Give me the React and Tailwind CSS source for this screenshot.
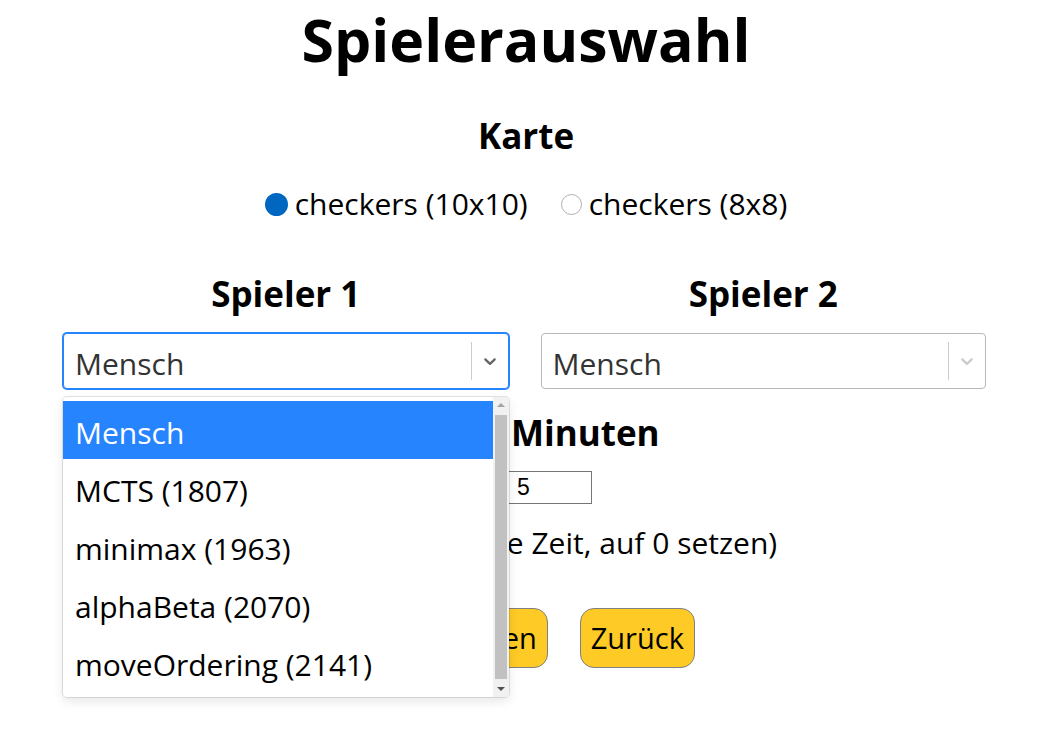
import React from 'react';

const Chevron = ({ className }) => (
    <svg viewBox="0 0 20 20" className={className} fill="currentColor" aria-hidden="true">
        <path d="M4.516 7.548c0.436-0.446 1.043-0.481 1.576 0l3.908 3.747 3.908-3.747c0.533-0.481 1.141-0.446 1.574 0 0.436 0.445 0.408 1.197 0 1.615-0.406 0.418-4.695 4.502-4.695 4.502-0.217 0.223-0.502 0.335-0.787 0.335s-0.57-0.112-0.789-0.335c0 0-4.287-4.084-4.695-4.502s-0.436-1.17 0-1.615z" />
    </svg>
);

const Select = ({ focused }) => (
    <div
        className={
            focused
                ? 'flex h-[56px] items-center rounded-[4px] border border-[#2684ff] bg-white shadow-[0_0_0_1px_#2684ff]'
                : 'flex h-[56px] items-center rounded-[4px] border border-[#b8b8b8] bg-white'
        }
    >
        <div className="flex-1 pl-[11px] pt-[6px] text-[30px] leading-none text-[#333]">Mensch</div>
        <span className="h-[38px] w-px bg-[#cccccc]"></span>
        <div className={focused ? 'p-2 text-[#666]' : 'p-2 text-[#cccccc]'}>
            <Chevron className="h-5 w-5" />
        </div>
    </div>
);

const options = ['Mensch', 'MCTS (1807)', 'minimax (1963)', 'alphaBeta (2070)', 'moveOrdering (2141)'];

const Menu = () => (
    <div className="absolute left-0 right-0 top-[calc(100%+8px)] z-10 flex h-[300px] overflow-hidden rounded-[4px] bg-white shadow-[0_0_0_1px_rgba(0,0,0,0.1),0_4px_11px_rgba(0,0,0,0.1)]">
        <div className="flex-1 py-1">
            {options.map((o, i) => (
                <div
                    key={o}
                    className={
                        i === 0
                            ? 'flex h-[58px] items-center bg-[#2684ff] px-3 pt-[4px] text-[30px] text-white'
                            : 'flex h-[58px] items-center px-3 pt-[4px] text-[30px] text-black'
                    }
                >
                    {o}
                </div>
            ))}
        </div>
        {/* fake scrollbar */}
        <div className="flex w-[16px] flex-col items-center bg-[#f1f1f1]">
            <div className="mt-[6px] h-0 w-0 border-x-[4px] border-b-[4px] border-x-transparent border-b-[#a3a3a3]"></div>
            <div className="mt-[8px] w-[12px] flex-1 bg-[#c1c1c1]"></div>
            <div className="mb-[6px] mt-[8px] h-0 w-0 border-x-[4px] border-t-[4px] border-x-transparent border-t-[#505050]"></div>
        </div>
    </div>
);

export default function App() {
    return (
        <div className="min-h-screen bg-white font-['Open_Sans','Noto_Sans',sans-serif] text-black">
            <h1 className="pt-[3px] text-center text-[59px] font-bold leading-[72px]">Spielerauswahl</h1>

            <h2 className="mt-[41px] text-center text-[35px] font-bold leading-[40px]">Karte</h2>
            <div className="mt-[28px] flex items-center justify-center gap-[33px] text-[30px] leading-[40px]">
                <label className="flex items-center gap-[7px]">
                    <span className="h-[23px] w-[23px] rounded-full bg-[#0067c0]"></span>
                    checkers (10x10)
                </label>
                <label className="flex items-center gap-[7px]">
                    <span className="h-[21px] w-[21px] rounded-full border border-[#b0b0b0] bg-white"></span>
                    checkers (8x8)
                </label>
            </div>

            <div className="mt-[50px] grid grid-cols-2 gap-8 pl-[63px] pr-[66px]">
                <div>
                    <h3 className="text-center text-[35px] font-bold leading-[40px]">Spieler 1</h3>
                    <div className="relative mt-[19px]">
                        <Select focused />
                        <Menu />
                    </div>
                </div>
                <div>
                    <h3 className="text-center text-[35px] font-bold leading-[40px]">Spieler 2</h3>
                    <div className="mt-[19px]">
                        <Select />
                    </div>
                </div>
            </div>

            <h3 className="mt-[24px] text-center text-[35px] font-bold leading-[40px]">Zeit in Minuten</h3>
            <div className="mt-[18px] flex items-center justify-center gap-2 pr-[21px] text-[30px] leading-[33px]">
                <span>Zeit:</span>
                <input
                    readOnly
                    value="5"
                    className="h-[33px] w-[85px] border border-[#767676] px-[9px] font-['Liberation_Sans',sans-serif] text-[23px]"
                />
            </div>
            <p className="mt-[20px] pl-[14px] text-center text-[30px] leading-[38px]">(für unbegrenzte Zeit, auf 0 setzen)</p>

            <div className="mt-[46px] flex justify-center gap-8">
                <button className="h-[60px] rounded-[14px] border border-[#808080] bg-[#fdca26] px-[10px] text-[29px]">
                    Spiel starten
                </button>
                <button className="h-[60px] rounded-[14px] border border-[#808080] bg-[#fdca26] px-[10px] text-[29px]">
                    Zurück
                </button>
            </div>
        </div>
    );
}
